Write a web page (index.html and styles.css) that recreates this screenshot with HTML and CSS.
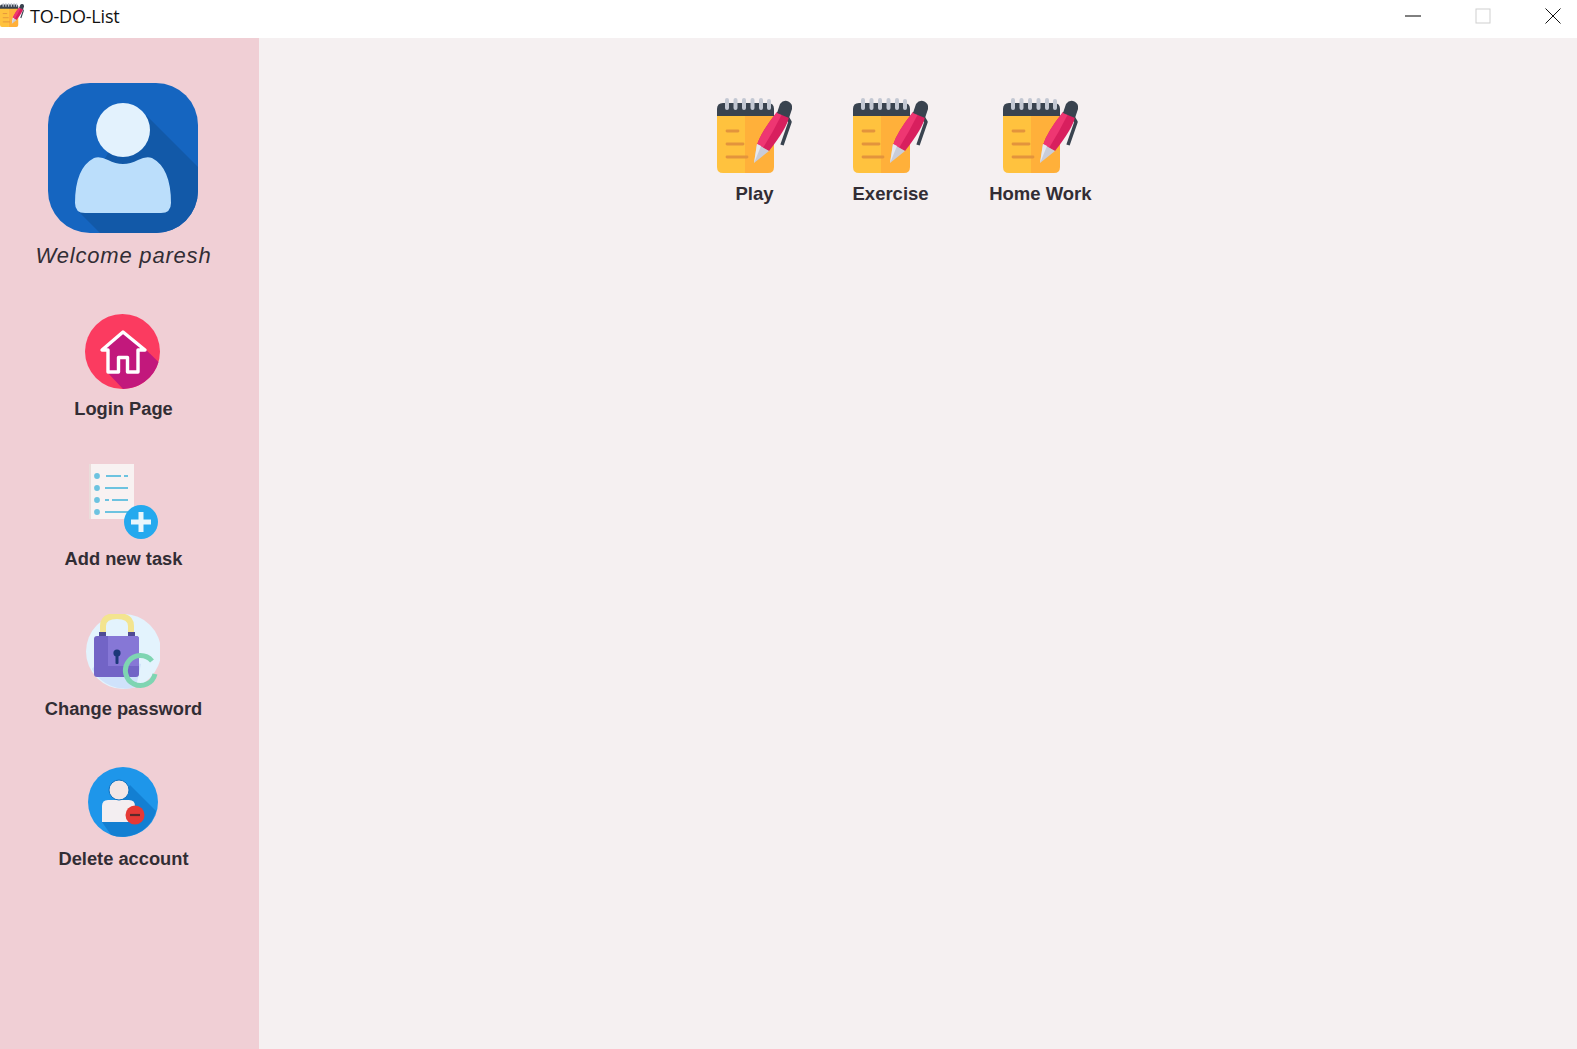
FILE: index.html
```html
<!DOCTYPE html>
<html lang="en">
<head>
<meta charset="utf-8">
<title>TO-DO-List</title>
<link rel="stylesheet" href="styles.css">
</head>
<body>
<svg class="defs" aria-hidden="true">
  <defs>
    <symbol id="notepad" viewBox="0 0 75 75">
      <path d="M0 14H28V75H6Q0 75 0 69Z" fill="#ffc23e"/>
      <path d="M28 14H57V69Q57 75 51 75H28Z" fill="#ffb03a"/>
      <path d="M0 18V11Q0 5 6 5H51Q57 5 57 11V18Z" fill="#39434f"/>
      <g fill="#c3c8d3">
        <rect x="8" y="0" width="4" height="12" rx="2"/>
        <rect x="16.500" y="0" width="4" height="12" rx="2"/>
        <rect x="25" y="0" width="4" height="12" rx="2"/>
        <rect x="33.500" y="0" width="4" height="12" rx="2"/>
        <rect x="42" y="0" width="4" height="12" rx="2"/>
        <rect x="50" y="1" width="4" height="11" rx="2"/>
      </g>
      <g stroke="#e3943c" stroke-width="2.800" stroke-linecap="round">
        <path d="M10 33H21"/>
        <path d="M10 46H26"/>
        <path d="M10 59H30"/>
      </g>
      <path d="M70 19L73 24L65 47" fill="none" stroke="#39434f" stroke-width="3.500" stroke-linejoin="round"/>
      <path d="M60 14L72 19Q70 30 52 53L40 47Q44 34 60 14Z" fill="#d81f5e"/>
      <path d="M60 14L65 16Q56 34 46 50L40 47Q44 34 60 14Z" fill="#ee3672"/>
      <path d="M40 46L52 53L37 65Z" fill="#c9ccd8"/>
      <path d="M40 46L44 48L37 65Z" fill="#e6e8ee"/>
      <path d="M60 15L63 6Q66 2 70 3Q76 5 75 11L72 20Z" fill="#39434f"/>
    </symbol>
  </defs>
</svg>

<header class="titlebar">
  <div class="title">
    <svg class="title-icon"><use href="#notepad"/></svg>
    <span class="title-text">TO-DO-List</span>
  </div>
  <div class="controls">
    <svg class="ctrl ctrl-min" viewBox="0 0 16 16"><path d="M0 8H16" stroke="#000" stroke-width="1"/></svg>
    <svg class="ctrl ctrl-max" viewBox="0 0 16 16"><rect x="1" y="1" width="14" height="14" fill="none" stroke="#cfcfcf"/></svg>
    <svg class="ctrl ctrl-close" viewBox="0 0 16 16"><path d="M.5.500L15.500 15.500M15.500.500L.5 15.500" stroke="#111" stroke-width="1" fill="none"/></svg>
  </div>
</header>

<div class="app">
  <aside class="sidebar">
    <svg class="avatar" viewBox="0 0 150 150">
      <defs>
        <clipPath id="avatar-clip"><rect width="150" height="150" rx="42"/></clipPath>
      </defs>
      <g clip-path="url(#avatar-clip)">
        <rect width="150" height="150" fill="#1565c0"/>
        <path d="M98 32L152 86V152H54L30 128L60 70Z" fill="#1259a8"/>
        <path d="M27 120Q27 85 46 75Q52 73 60 77Q75 85 90 77Q98 73 104 75Q123 85 123 120Q123 130 113 130H37Q27 130 27 120Z" fill="#bbdefb"/>
        <circle cx="75" cy="47" r="27" fill="#e3f2fd"/>
      </g>
    </svg>
    <p class="welcome">Welcome paresh</p>

    <nav class="nav">
      <a class="nav-item">
        <svg class="nav-icon" viewBox="0 0 75 75">
          <circle cx="37.500" cy="37.500" r="37.500" fill="#fb3b60"/>
          <path d="M53 28L73.500 48A37.500 37.500 0 0 1 38 75L22 58L22 36Z" fill="#c2187c"/>
          <path d="M38 18L17 36H23V58H33.500V43.500H42.500V58H53V36H60Z" fill="#c2187c" stroke="#fff" stroke-width="3.400" stroke-linejoin="round"/>
        </svg>
        <span class="nav-label">Login Page</span>
      </a>
      <a class="nav-item">
        <svg class="nav-icon" viewBox="0 0 75 75">
          <rect x="4" y="0" width="5" height="55" fill="#eadcda"/>
          <rect x="6" y="0" width="43" height="55" fill="#f8f2f2"/>
          <g fill="#6cc3e0">
            <circle cx="12" cy="12" r="2.900"/>
            <circle cx="12" cy="24" r="2.900"/>
            <circle cx="12" cy="36" r="2.900"/>
            <circle cx="12" cy="48" r="2.900"/>
          </g>
          <g stroke="#6cc3e0" stroke-width="2">
            <path d="M21 12H36M39 12H43"/>
            <path d="M20 24H43"/>
            <path d="M20 36H24M27 36H43"/>
            <path d="M20 48H43"/>
          </g>
          <circle cx="56" cy="58" r="17" fill="#24a9ee"/>
          <path d="M56 48V68M46 58H66" stroke="#e8f6fc" stroke-width="5"/>
        </svg>
        <span class="nav-label">Add new task</span>
      </a>
      <a class="nav-item">
        <svg class="nav-icon" viewBox="0 0 75 75">
          <g transform="translate(1 0)">
            <circle cx="37.500" cy="37.500" r="37.500" fill="#e3f3fd"/>
            <path d="M6 55A37.500 37.500 0 0 0 50 73L55 50L20 40Z" fill="#cfe2fb"/>
            <path d="M17 22V12Q17 2 31 2Q45 2 45 12V22" fill="none" stroke="#f3e48f" stroke-width="6"/>
            <rect x="13" y="18" width="7" height="6" fill="#4f4b94"/>
            <rect x="42" y="18" width="7" height="6" fill="#4f4b94"/>
            <rect x="8" y="22" width="45" height="41" rx="3" fill="#7264c6"/>
            <path d="M22 22H50Q53 22 53 25V52H22Z" fill="#8677d6"/>
            <circle cx="31" cy="39" r="3.600" fill="#1c3878"/>
            <rect x="29.500" y="39" width="3" height="11" rx="1" fill="#1c3878"/>
            <path d="M66 47A15 15 0 1 0 69 60" fill="none" stroke="#7ed5b2" stroke-width="5"/>
          </g>
        </svg>
        <span class="nav-label">Change password</span>
      </a>
      <a class="nav-item">
        <svg class="nav-icon" viewBox="0 0 75 75">
          <g transform="translate(3 3)">
            <circle cx="35" cy="35" r="35" fill="#1e96ea"/>
            <path d="M42 18L68 44A35 35 0 0 1 23 68L14 55Z" fill="#137fd2"/>
            <path d="M14 39Q14 33 20 33H41Q47 33 47 39V55H14Z" fill="#f3eef1"/>
            <circle cx="31" cy="23" r="10" fill="#f3e6e6" stroke="#1272c0" stroke-width="1"/>
            <circle cx="47" cy="48" r="9.500" fill="#e53935"/>
            <path d="M42 48H52" stroke="#5a2a2a" stroke-width="2.200"/>
          </g>
        </svg>
        <span class="nav-label">Delete account</span>
      </a>
    </nav>
  </aside>

  <main class="main">
    <div class="lists">
      <a class="list-item"><svg class="list-icon"><use href="#notepad"/></svg><span class="list-label">Play</span></a>
      <a class="list-item"><svg class="list-icon"><use href="#notepad"/></svg><span class="list-label">Exercise</span></a>
      <a class="list-item"><svg class="list-icon"><use href="#notepad"/></svg><span class="list-label">Home Work</span></a>
    </div>
  </main>
</div>
</body>
</html>
```

FILE: styles.css
```css
* {
  box-sizing: border-box;
}

html,
body {
  margin: 0;
  height: 100%;
}

body {
  display: flex;
  flex-direction: column;
  overflow: hidden;
  font-family: "Liberation Sans", Arial, sans-serif;
  background: #f5f0f1;
  color: #322d34;
}

.defs {
  display: none;
}

.titlebar {
  flex: 0 0 38px;
  display: flex;
  justify-content: space-between;
  background: #fff;
}

.title {
  display: flex;
  align-items: flex-start;
  gap: 6px;
  padding-top: 3px;
}

.title-icon {
  width: 24px;
  height: 24px;
}

.title-text {
  font-family: "Open Sans", sans-serif;
  font-size: 18px;
  line-height: 27px;
  color: #111;
  letter-spacing: -0.2px;
}

.controls {
  display: flex;
  align-items: flex-start;
  padding: 8px 16px 0 0;
  gap: 54px;
}

.ctrl {
  width: 16px;
  height: 16px;
  display: block;
}

.app {
  flex: 1;
  display: flex;
  min-height: 0;
}

.sidebar {
  flex: 0 0 259px;
  display: flex;
  flex-direction: column;
  align-items: center;
  padding: 45px 12px 0 0;
  background: #f0cfd5;
}

.avatar {
  width: 150px;
  height: 150px;
  display: block;
  margin-left: -2px;
}

.welcome {
  margin: 10px 0 0;
  font-size: 22px;
  line-height: 26px;
  font-style: italic;
  letter-spacing: 0.8px;
  white-space: nowrap;
}

.nav {
  display: flex;
  flex-direction: column;
  align-items: center;
  gap: 43px;
  margin-top: 45px;
}

.nav-item {
  display: flex;
  flex-direction: column;
  align-items: center;
  gap: 8px;
}

.nav-icon {
  width: 75px;
  height: 75px;
  display: block;
  margin-left: -2px;
}

.nav-label {
  font-size: 18.3px;
  line-height: 24px;
  font-weight: 700;
  white-space: nowrap;
}

.main {
  flex: 1;
  min-width: 0;
}

.lists {
  display: flex;
  align-items: flex-start;
  gap: 60.5px;
  padding: 60px 0 0 458px;
}

.list-item {
  display: flex;
  flex-direction: column;
  align-items: center;
  gap: 9px;
}

.list-icon {
  width: 75px;
  height: 75px;
  display: block;
}

.list-label {
  font-size: 18.5px;
  line-height: 24px;
  font-weight: 700;
  white-space: nowrap;
}
```
